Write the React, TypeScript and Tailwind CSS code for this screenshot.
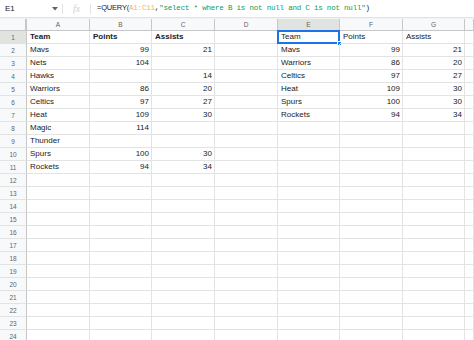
const left: (string | number)[][] = [
  ['Team', 'Points', 'Assists'],
  ['Mavs', 99, 21],
  ['Nets', 104, ''],
  ['Hawks', '', 14],
  ['Warriors', 86, 20],
  ['Celtics', 97, 27],
  ['Heat', 109, 30],
  ['Magic', 114, ''],
  ['Thunder', '', ''],
  ['Spurs', 100, 30],
  ['Rockets', 94, 34],
]

const right: (string | number)[][] = [
  ['Team', 'Points', 'Assists'],
  ['Mavs', 99, 21],
  ['Warriors', 86, 20],
  ['Celtics', 97, 27],
  ['Heat', 109, 30],
  ['Spurs', 100, 30],
  ['Rockets', 94, 34],
]

const cols = ['A', 'B', 'C', 'D', 'E', 'F', 'G', '']
const grid = 'grid grid-cols-[27px_63px_62px_63px_63px_62px_63px_62px_1fr]'

function Cell({ v, bold, selected }: { v: string | number | undefined; bold?: boolean; selected?: boolean }) {
  const num = typeof v === 'number'
  return (
    <div
      className={
        'relative h-[13px] border-r border-b border-[#e2e3e3] text-[8px] leading-[12px] text-[#202124] overflow-visible whitespace-nowrap ' +
        (num ? 'text-right pr-[2px] ' : 'pl-[3px] ') +
        (bold ? 'font-bold' : '')
      }
    >
      {v}
      {selected && (
        <>
          <div className="absolute -left-px -top-px w-[63px] h-[14px] border-2 border-[#1a73e8] pointer-events-none" />
          <div className="absolute -right-[3px] -bottom-[3px] w-[5px] h-[5px] bg-[#1a73e8] border border-white" />
        </>
      )}
    </div>
  )
}

export default function App() {
  const rows = Array.from({ length: 24 }, (_, i) => i + 1)

  return (
    <div className="w-[474px] h-[340px] overflow-hidden bg-white" style={{ fontFamily: '"Liberation Sans", Arial, sans-serif' }}>
      {/* formula bar */}
      <div className="h-[18px] flex items-center border-b border-[#e1e3e1] text-[8px] text-[#202124]">
        <div className="w-[62px] pl-[5px] flex items-center justify-between pr-[4px]">
          <span>E1</span>
          <svg width="6" height="4" viewBox="0 0 6 4"><path d="M0 0h6L3 3.5z" fill="#5f6368" /></svg>
        </div>
        <div className="w-px h-[10px] bg-[#e1e3e1]" />
        <div className="w-[27px] flex justify-center text-[#d0d3d6] italic text-[10px]" style={{ fontFamily: '"Liberation Serif", serif' }}>
          fx
        </div>
        <div className="w-px h-[10px] bg-[#e1e3e1]" />
        <div className="pl-[6px] whitespace-nowrap text-[7.5px] tracking-[-0.2px]">
          <span>=QUERY(</span>
          <span className="text-[#f6b26b]" style={{ fontFamily: '"Liberation Mono", monospace' }}>A1:C11</span>
          <span style={{ fontFamily: '"Liberation Mono", monospace' }}>,</span>
          <span className="text-[#0f9d58]" style={{ fontFamily: '"Liberation Mono", monospace' }}>"select * where B is not null and C is not null"</span>
          <span style={{ fontFamily: '"Liberation Mono", monospace' }}>)</span>
        </div>
      </div>

      <div className="h-px bg-[#f1f3f4]" />

      {/* column headers */}
      <div className={grid + ' h-[12px] bg-[#f8f9fa] border-b border-[#c7c7c7]'}>
        <div className="border-r-[2px] border-r-[#c7c7c7]" />
        {cols.map((c, i) => (
          <div
            key={i}
            className={
              'border-r border-[#c7c7c7] text-[6.5px] leading-[12px] text-center text-[#5f6368] ' +
              (c === 'E' ? 'bg-[#e1e3e1]' : '')
            }
          >
            {c}
          </div>
        ))}
      </div>

      {rows.map((r) => {
        const l = left[r - 1]
        const rt = right[r - 1]
        return (
          <div key={r} className={grid}>
            <div
              className={
                'h-[13px] border-r border-[#c7c7c7] border-b border-b-[#e2e3e3] text-[6.5px] leading-[13px] text-center text-[#5f6368] ' +
                (r === 1 ? 'bg-[#e1e3e1]' : 'bg-[#f8f9fa]')
              }
            >
              {r}
            </div>
            <Cell v={l?.[0]} bold={r === 1} />
            <Cell v={l?.[1]} bold={r === 1} />
            <Cell v={l?.[2]} bold={r === 1} />
            <Cell v={undefined} />
            <Cell v={rt?.[0]} selected={r === 1} />
            <Cell v={rt?.[1]} />
            <Cell v={rt?.[2]} />
            <Cell v={undefined} />
          </div>
        )
      })}
    </div>
  )
}
